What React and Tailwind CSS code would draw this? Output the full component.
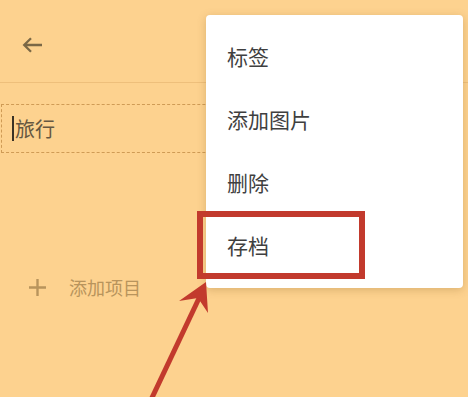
export default function App() {
  const font = { fontFamily: '"Noto Sans CJK SC", "Noto Sans", sans-serif' };
  return (
    <div className="relative w-[468px] h-[397px] overflow-hidden bg-[#fdd28f]" style={font}>
      <div className="h-[83px] flex items-center pl-[22px] pt-[8px] border-b border-[#eebf7b]">
        <svg width="21" height="16" viewBox="0 0 21 16" fill="none">
          <path d="M20 8H2.5M9 1.2L2.2 8l6.8 6.8" stroke="#7b6846" strokeWidth="2.3" />
        </svg>
      </div>
      <div className="mt-[21px] ml-[1px] w-[300px] h-[49px] border border-dashed border-[#cf9b55] flex items-center pl-[10px]">
        <span className="w-[2px] h-[25px] bg-[#3a3226] mr-[1px]"></span>
        <span className="text-[20px] text-[#655741] leading-none">旅行</span>
      </div>
      <div className="mt-[114px] h-[40px] flex items-center pl-[28px]">
        <svg width="19" height="19" viewBox="0 0 19 19">
          <path d="M9.5 1v17M1 9.5h17" stroke="#b8945c" strokeWidth="2.4" />
        </svg>
        <span className="ml-[22px] text-[18px] text-[#b8945c] leading-none">添加项目</span>
      </div>

      <div className="absolute left-[206px] top-[15px] w-[257px] h-[273px] bg-white rounded-[4px] shadow-[0_2px_8px_rgba(120,80,20,0.25)] py-[10px]">
        {["标签", "添加图片", "删除", "存档"].map((t) => (
          <div key={t} className="h-[63px] flex items-center pl-[21px] text-[21px] text-[#3f3f3f] leading-none">
            {t}
          </div>
        ))}
      </div>

      <div className="absolute left-[197px] top-[211px] w-[168px] h-[68px] border-[6px] border-[#c23a2d]"></div>

      <svg className="absolute left-0 top-0" width="468" height="397" viewBox="0 0 468 397">
        <line x1="150" y1="402" x2="201" y2="294" stroke="#c23a2d" strokeWidth="5" />
        <polygon points="206,282 179,301 198,298 208,313" fill="#c23a2d" />
      </svg>
    </div>
  );
}
